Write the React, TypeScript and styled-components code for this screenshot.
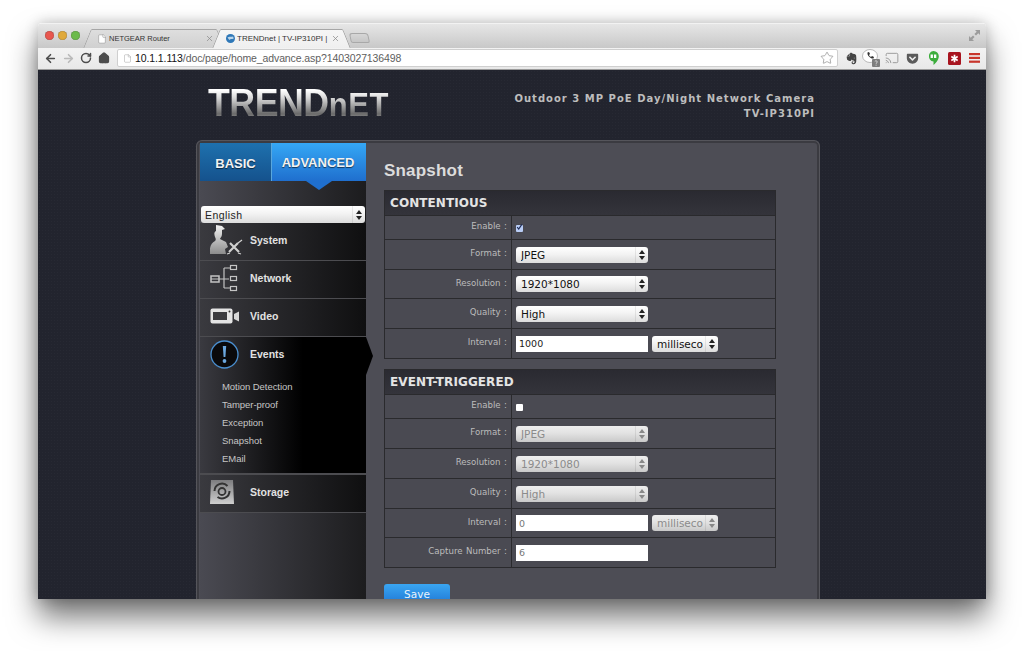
import React from 'react';
import styled, { createGlobalStyle } from 'styled-components';
import { ArrowLeft, ArrowRight, Cast, File, Home, RotateCw, Star, X } from 'lucide-react';
import { FaEvernote, FaGetPocket } from 'react-icons/fa';

const GlobalStyle = createGlobalStyle`
  html, body {
    margin: 0;
    padding: 0;
    background: #fff;
    overflow: hidden;
  }
  * {
    box-sizing: border-box;
  }
`;

const Page = styled.div`
  width: 1024px;
  height: 651px;
  padding: 23px 38px 52px;
  background: #fff;
`;

const Window = styled.div`
  height: 576px;
  display: flex;
  flex-direction: column;
  overflow: hidden;
  border-radius: 4px 4px 0 0;
  box-shadow: 0 18px 30px rgba(0, 0, 0, 0.55), 0 0 14px rgba(0, 0, 0, 0.22);
`;

const TabStrip = styled.div`
  height: 25px;
  flex: none;
  display: flex;
  align-items: flex-end;
  padding-right: 6px;
  background: linear-gradient(#e6e6e6, #c8c8c8);
  border-top: 1px solid #f2f2f2;
`;

const Lights = styled.div`
  display: flex;
  gap: 4px;
  align-self: flex-start;
  margin: 7px 0 0 7px;
`;

const Light = styled.span<{ $color: string }>`
  width: 9px;
  height: 9px;
  border-radius: 50%;
  background: ${p => p.$color};
  box-shadow: inset 0 0 1px rgba(0, 0, 0, 0.6);
`;

const Tab = styled.div<{ $active?: boolean; $width: number }>`
  position: relative;
  z-index: ${p => (p.$active ? 2 : 1)};
  width: ${p => p.$width}px;
  height: 19px;
  margin-left: ${p => (p.$active ? 5 : 12)}px;
  padding: 0 2px 1px 5px;
  display: flex;
  align-items: center;
  gap: 2px;
  font: ${p => (p.$active ? 8 : 7.5)}px 'Liberation Sans', sans-serif;
  color: #333;
  white-space: nowrap;
  background: ${p => (p.$active ? 'linear-gradient(#f6f6f6, #efefef)' : 'linear-gradient(#dedede, #d0d0d0)')};
  border-top: 1px solid #a6a6a6;
  &::before,
  &::after {
    content: '';
    position: absolute;
    top: -1px;
    bottom: 0;
    width: 10px;
    background: inherit;
    border-top: 1px solid #a6a6a6;
  }
  &::before {
    left: -5px;
    transform: skewX(-22deg);
    border-left: 1px solid #a6a6a6;
    border-radius: 2px 0 0 0;
  }
  &::after {
    right: -5px;
    transform: skewX(22deg);
    border-right: 1px solid #a6a6a6;
    border-radius: 0 2px 0 0;
  }
`;

const TabTitle = styled.span`
  position: relative;
  z-index: 1;
  flex: 1;
  overflow: hidden;
`;

const TabIcon = styled.span`
  position: relative;
  z-index: 1;
  display: flex;
  flex: none;
  color: #8c8c8c;
`;

const NewTab = styled.div`
  width: 19px;
  height: 10px;
  margin: 0 0 5px 8px;
  background: linear-gradient(#d6d6d6, #c6c6c6);
  border: 1px solid #a8a8a8;
  border-radius: 3px 3px 2px 2px;
  transform: skewX(12deg);
`;

const Resize = styled.div`
  margin-left: auto;
  align-self: flex-start;
  margin-top: 6px;
  display: flex;
`;

const Toolbar = styled.div`
  position: relative;
  z-index: 3;
  height: 22px;
  flex: none;
  display: flex;
  align-items: center;
  padding: 0 0 1px 3px;
  background: linear-gradient(#f3f3f3, #e8e8e8);
  border-bottom: 1px solid #9b9b9b;
`;

const NavButton = styled.span<{ $muted?: boolean }>`
  width: 18px;
  display: flex;
  justify-content: center;
  color: ${p => (p.$muted ? '#b9b9b9' : '#4d4d4d')};
`;

const Omnibox = styled.div`
  width: 721px;
  height: 18px;
  margin-left: 4px;
  padding: 0 3px 0 5px;
  display: flex;
  align-items: center;
  gap: 3px;
  background: #fff;
  border: 1px solid #cfcfcf;
  border-radius: 2px;
  font: 10.5px 'Liberation Sans', sans-serif;
  letter-spacing: -0.1px;
  color: #5e5e5e;
`;

const Host = styled.span`
  color: #111;
`;

const Url = styled.span`
  flex: 1;
`;

const Extensions = styled.div`
  flex: 1;
  display: grid;
  grid-template-columns: repeat(7, 1fr);
  justify-items: center;
  align-items: center;
  padding: 0 1px 0 3px;
`;

const Extension = styled.span`
  display: flex;
`;

const Content = styled.div`
  flex: 1;
  min-height: 0;
  padding: 0 0 0 158px;
  background-color: #22242e;
  background-image: radial-gradient(#272933 0.6px, transparent 1px);
  background-size: 3px 3px;
`;

const Header = styled.header`
  width: 619px;
  height: 70px;
  padding: 16px 0 0 12px;
  display: flex;
  justify-content: space-between;
`;

const Logo = styled.div`
  height: 34px;
  font: 700 38px/34px 'Liberation Sans', sans-serif;
  letter-spacing: -0.5px;
  color: transparent;
  background: linear-gradient(#fff 12%, #d8d8d8 35%, #6a6a6a 82%, #9a9a9a);
  -webkit-background-clip: text;
  background-clip: text;
  transform: scaleX(0.94);
  transform-origin: left;
`;

const LogoTail = styled.span`
  font-size: 33px;
  letter-spacing: 0.6px;
`;

const Model = styled.div`
  padding-top: 5px;
  text-align: right;
  font: 700 10px/15px 'DejaVu Sans', sans-serif;
  letter-spacing: 1.02px;
  color: #bdbdbd;
`;

const Panel = styled.div`
  width: 624px;
  height: 520px;
  padding: 2px 2px 0 3px;
  display: flex;
  background: #4d4d55;
  border: 1px solid #55555b;
  border-bottom: 0;
  border-radius: 6px 6px 0 0;
  box-shadow: inset 0 0 0 2px #3b3b41;
`;

const Sidebar = styled.nav`
  position: relative;
  width: 166px;
  flex: none;
  background: linear-gradient(90deg, #4a4a52, #1c1c1e);
`;

const Tabs = styled.div`
  height: 38px;
  display: flex;
`;

const ModeTab = styled.div<{ $active?: boolean; $width: number }>`
  position: relative;
  width: ${p => p.$width}px;
  display: flex;
  align-items: center;
  justify-content: center;
  padding: 2px ${p => (p.$active ? 2 : 0)}px ${p => (p.$active ? 2 : 0)}px 0;
  font: 700 13px 'Liberation Sans', sans-serif;
  color: #f2f2f2;
  text-shadow: 0 1px 1px rgba(0, 0, 0, 0.6);
  background: ${p =>
    p.$active
      ? 'linear-gradient(#35a8f5, #1f6fce)'
      : 'linear-gradient(#1e71ae, #15528d)'};
  border-left: ${p => (p.$active ? '1px solid #5aa7dc' : 0)};
  ${p =>
    p.$active &&
    `
    &::after {
      content: '';
      position: absolute;
      left: 34px;
      bottom: -9px;
      border: 13px solid transparent;
      border-bottom: 0;
      border-top: 9px solid #1f6fce;
    }
  `}
`;

const LangRow = styled.div`
  padding: 25px 0 0 1px;
`;

const Item = styled.div<{ $active?: boolean }>`
  position: relative;
  height: 38px;
  padding: 0 0 4px 10px;
  display: flex;
  align-items: center;
  background: ${p =>
    p.$active
      ? 'linear-gradient(90deg, #3a3a40, #000 62%)'
      : 'linear-gradient(90deg, #3a3a3f, #0f0f10)'};
  border-bottom: ${p => (p.$active ? 0 : '1px solid #4c4c50')};
  font: 700 10.5px 'Liberation Sans', sans-serif;
  color: #e2e2e2;
`;

const ItemIcon = styled.span`
  width: 40px;
  flex: none;
  display: flex;
  align-items: center;
`;

const EventsGroup = styled.div`
  position: relative;
  height: 138px;
  background: linear-gradient(90deg, #3a3a40, #000 62%);
  border-bottom: 2px solid #4c4c50;
`;

const EventsHead = styled(Item)`
  background: none;
`;

const Pointer = styled.span`
  position: absolute;
  top: 0;
  left: 100%;
  z-index: 2;
  width: 7px;
  height: 38px;
  background: #000;
  clip-path: polygon(0 0, 100% 50%, 0 100%);
`;

const SubList = styled.ul`
  list-style: none;
  margin: 3px 0 0;
  padding: 0 0 0 22px;
  font: 9.5px/18px 'Liberation Sans', sans-serif;
  letter-spacing: -0.05px;
  color: #c6c6c6;
`;

const Main = styled.main`
  flex: 1;
  padding: 0 41px 0 18px;
`;

const Title = styled.h1`
  margin: 0;
  height: 47px;
  padding-top: 18px;
  font: 700 17px/20px 'Liberation Sans', sans-serif;
  letter-spacing: 0.2px;
  color: #dcdcdc;
`;

const Section = styled.section`
  margin-bottom: 10px;
  background: #4a4a52;
  border: 1px solid #2a2a2d;
`;

const SectionHead = styled.h2`
  margin: 0;
  height: 24px;
  padding-left: 5px;
  font: 700 12px/24px 'DejaVu Sans', sans-serif;
  letter-spacing: 0.08px;
  color: #e4e4e4;
  background: linear-gradient(#2a2a31, #34343b);
`;

const Row = styled.div<{ $height: number }>`
  height: ${p => p.$height}px;
  display: flex;
  border-top: 1px solid #2a2a2d;
`;

const Label = styled.div`
  width: 127px;
  flex: none;
  padding: 0 4px 3px 0;
  display: flex;
  align-items: center;
  justify-content: flex-end;
  font: 8.6px 'DejaVu Sans', sans-serif;
  word-spacing: 0.8px;
  color: #bcbcbc;
  border-right: 1px solid #2a2a2d;
`;

const Field = styled.div`
  flex: 1;
  padding-left: 4px;
  display: flex;
  align-items: center;
  gap: 4px;
`;

const SelectWrap = styled.div<{ $width: number; $height?: number }>`
  position: relative;
  width: ${p => p.$width}px;
  height: ${p => p.$height ?? 16}px;
`;

const Select = styled.select`
  display: block;
  width: 100%;
  height: 100%;
  margin: 0;
  padding: 0 14px 0 5px;
  appearance: none;
  border: 0;
  border-radius: 3px;
  outline: 0;
  font: 10.5px 'DejaVu Sans', sans-serif;
  opacity: 1;
  color: #111;
  background: linear-gradient(#fff, #f3f3f3 45%, #dcdcdc);
  &:disabled {
    color: #8b8b8b;
    background: linear-gradient(#eeeeee, #e2e2e2 45%, #c9c9c9);
  }
`;

const LangSelect = styled(Select)`
  padding-left: 4px;
  font: 10.5px 'Liberation Sans', sans-serif;
  letter-spacing: 0.45px;
  color: #222;
`;

const ArrowBox = styled.span<{ $disabled?: boolean }>`
  position: absolute;
  top: 0;
  right: 0;
  width: 13px;
  height: 100%;
  display: flex;
  align-items: center;
  justify-content: center;
  color: ${p => (p.$disabled ? '#888' : '#222')};
  border-left: 1px solid rgba(0, 0, 0, 0.08);
  pointer-events: none;
`;

const TextInput = styled.input`
  width: 132px;
  height: 16px;
  margin: 0;
  padding: 0 3px;
  border: 0;
  outline: 0;
  font: 9.5px 'DejaVu Sans', sans-serif;
  color: #222;
  background: #fff;
  &:disabled {
    color: #777;
    background: #fff;
  }
`;

const CheckBox = styled.span<{ $checked?: boolean }>`
  width: 7px;
  height: 7px;
  margin: 2px 0 0 0;
  display: flex;
  border-radius: 1px;
  background: ${p => (p.$checked ? '#b9cdf6' : '#fff')};
`;

const SaveButton = styled.button`
  width: 66px;
  height: 20px;
  margin-top: 6px;
  padding: 0;
  border: 0;
  border-radius: 3px 3px 0 0;
  font: 10.5px 'DejaVu Sans', sans-serif;
  color: #e8f3fc;
  background: linear-gradient(#3aa6f2, #1f78d6);
`;

const Arrows: React.FC<{ disabled?: boolean }> = ({ disabled }) => (
  <ArrowBox $disabled={disabled}>
    <svg width="6" height="10" viewBox="0 0 6 10" fill="currentColor">
      <path d="M3 0l3 4H0zM3 10L0 6h6z" />
    </svg>
  </ArrowBox>
);

const Dropdown: React.FC<{ value: string; width?: number; disabled?: boolean }> = ({
  value,
  width = 132,
  disabled,
}) => (
  <SelectWrap $width={width}>
    <Select disabled={disabled} defaultValue={value}>
      <option>{value}</option>
    </Select>
    <Arrows disabled={disabled} />
  </SelectWrap>
);

const SystemIcon = () => (
  <svg width="34" height="32" viewBox="0 0 34 32">
    <defs>
      <linearGradient id="sys" x1="0" y1="0" x2="0" y2="1">
        <stop offset="0" stopColor="#f2f2f2" />
        <stop offset="1" stopColor="#8c8c8c" />
      </linearGradient>
    </defs>
    <path
      fill="url(#sys)"
      d="M6 1l6 1 3 3-3 1 0 4c0 3-2 4-2 5l6 3 2 5-3 2 1 5H0c-1-6 1-11 5-13 1-1 1-2 0-4-1-3-1-5 1-6z"
    />
    <path fill="none" stroke="#d0d0d0" strokeWidth="2.200" d="M19 28l9-9M20 19l9 9" />
    <path fill="none" stroke="#d0d0d0" strokeWidth="1.300" d="M28 19l4-3M17 30l3-1M28 29l3 1" />
  </svg>
);

const NetworkIcon = () => (
  <svg width="30" height="28" viewBox="0 0 30 28" fill="none" stroke="#c4c4c4" strokeWidth="1.2">
    <rect x="1" y="12" width="8" height="6" strokeWidth="1.5" />
    <path d="M1 15h8M9 15h10M14 4v20M14 4h6M14 24h6" />
    <rect x="20.5" y="1.5" width="6" height="4" />
    <rect x="20.5" y="12.5" width="6" height="4" />
    <rect x="20.5" y="22.5" width="6" height="4" />
  </svg>
);

const VideoIcon = () => (
  <svg width="30" height="16" viewBox="0 0 30 16">
    <rect x="0.5" y="0.5" width="22" height="15" rx="2" fill="#e4e4e4" />
    <rect x="3" y="4" width="14" height="8" fill="#3b3b3f" />
    <circle cx="19.5" cy="3.5" r="1" fill="#333" />
    <path d="M24 6l5-2.500v10l-5-2.500z" fill="#d8d8d8" />
  </svg>
);

const EventsIcon = () => (
  <svg width="29" height="29" viewBox="0 0 29 29">
    <circle cx="14.500" cy="14.500" r="13.500" fill="#0a0a0c" stroke="#4a8fd0" strokeWidth="1.300" />
    <path d="M12.800 6h3.400l-.8 11h-1.800z" fill="#6ba7de" />
    <circle cx="14.500" cy="21" r="1.900" fill="#6ba7de" />
  </svg>
);

const StorageIcon = () => (
  <svg width="24" height="25" viewBox="0 0 24 25">
    <defs>
      <linearGradient id="disk" x1="0" y1="0" x2="0" y2="1">
        <stop offset="0" stopColor="#7c7c7e" />
        <stop offset="1" stopColor="#cfcfcf" />
      </linearGradient>
    </defs>
    <path d="M1 1h22l1 24H0z" fill="url(#disk)" />
    <path
      d="M4.500 12a7.500 7.500 0 0 1 13-5M19.500 12a7.500 7.500 0 0 1-12 6"
      fill="none"
      stroke="#333"
      strokeWidth="2"
    />
    <circle cx="12" cy="12.500" r="3.500" fill="none" stroke="#333" strokeWidth="1.800" />
  </svg>
);

const ResizeIcon = () => (
  <svg width="11" height="11" viewBox="0 0 11 11" fill="#9c9c9c">
    <path d="M6 0h5v5L9.300 3.300 7 5.600 5.400 4 7.700 1.700zM0 11V6l1.700 1.700L4 5.400 5.600 7 3.300 9.300 5 11z" />
  </svg>
);

const GlobeIcon = () => (
  <svg width="9" height="9" viewBox="0 0 9 9">
    <circle cx="4.500" cy="4.500" r="4.500" fill="#2f78b8" />
    <path d="M1.500 3.500c2-1.500 3.500 0 5.500-1l.8 2c-2 1-3 0-4.500 1.500z" fill="#bcd6ea" />
  </svg>
);

const PhoneBubble = () => (
  <svg width="19" height="18" viewBox="0 0 19 18">
    <ellipse cx="8" cy="7" rx="7.500" ry="6.500" fill="#fff" stroke="#aaa" strokeWidth="0.800" />
    <path d="M5.500 3.500l1.500-.5 1 2-1 1c.5 1 1 1.500 2 2l1-1 2 1-.5 1.500c-3 .5-6.500-3-6-6z" fill="#333" />
    <rect x="10" y="10" width="8" height="8" rx="1" fill="#7d7d7d" />
    <path d="M12.800 12.500c.5-1 2.500-.8 2.500.4 0 .9-1.200.9-1.200 1.900M14.100 15.700v1" stroke="#eee" fill="none" strokeWidth="0.800" />
  </svg>
);

const Hangouts = () => (
  <svg width="11" height="15" viewBox="0 0 11 15">
    <path d="M5.500 0a5.300 5.300 0 0 1 5.300 5.300c0 3.500-2.800 6.700-5.300 8.700v-3.500a5.300 5.300 0 0 1 0-10.500z" fill="#3cad3c" />
    <rect x="2.600" y="3.500" width="2.300" height="3.500" fill="#fff" />
    <rect x="6" y="3.500" width="2.300" height="3.500" fill="#fff" />
  </svg>
);

const LastPass = () => (
  <svg width="13" height="13" viewBox="0 0 13 13">
    <rect width="13" height="13" rx="1.500" fill="#a8141f" />
    <path d="M6.500 2.800v7.400M3.300 4.600l6.400 3.800M9.700 4.600l-6.400 3.800" stroke="#fff" strokeWidth="1.700" />
  </svg>
);

const MenuBars = () => (
  <svg width="11" height="10" viewBox="0 0 11 10" fill="#c8352b">
    <rect width="11" height="2.200" />
    <rect y="3.800" width="11" height="2.200" />
    <rect y="7.600" width="11" height="2.200" />
  </svg>
);

const Check = () => (
  <svg width="9" height="9" viewBox="0 0 9 9" style={{ margin: '-2px 0 0 0' }}>
    <path d="M1.500 4l2 2.500L7.500 0.500" fill="none" stroke="#1c2a55" strokeWidth="1.500" />
  </svg>
);

const App: React.FC = () => {
  return (
    <Page>
      <GlobalStyle />
      <Window>
        <TabStrip>
          <Lights>
            <Light $color="#e8574f" />
            <Light $color="#e0a93a" />
            <Light $color="#6cba4c" />
          </Lights>
          <Tab $width={124}>
            <TabIcon>
              <File size={10} fill="#fff" strokeWidth={1.3} />
            </TabIcon>
            <TabTitle>NETGEAR Router</TabTitle>
            <TabIcon>
              <X size={9} strokeWidth={2} />
            </TabIcon>
          </Tab>
          <Tab $active $width={121}>
            <TabIcon>
              <GlobeIcon />
            </TabIcon>
            <TabTitle>TRENDnet | TV-IP310PI | C</TabTitle>
            <TabIcon>
              <X size={9} strokeWidth={2} />
            </TabIcon>
          </Tab>
          <NewTab />
          <Resize>
            <ResizeIcon />
          </Resize>
        </TabStrip>
        <Toolbar>
          <NavButton>
            <ArrowLeft size={13} strokeWidth={3} />
          </NavButton>
          <NavButton $muted>
            <ArrowRight size={13} strokeWidth={3} />
          </NavButton>
          <NavButton>
            <RotateCw size={12} strokeWidth={3} />
          </NavButton>
          <NavButton>
            <Home size={12} strokeWidth={2.5} fill="currentColor" />
          </NavButton>
          <Omnibox>
            <File size={9} strokeWidth={1.2} color="#999" />
            <Url>
              <Host>10.1.1.113</Host>/doc/page/home_advance.asp?1403027136498
            </Url>
            <Star size={14} strokeWidth={1.2} color="#8c8c8c" />
          </Omnibox>
          <Extensions>
            <Extension>
              <FaEvernote size={13} color="#444" />
            </Extension>
            <Extension>
              <PhoneBubble />
            </Extension>
            <Extension>
              <Cast size={14} color="#8a8a8a" strokeWidth={1.4} />
            </Extension>
            <Extension>
              <FaGetPocket size={13} color="#5b5b5b" />
            </Extension>
            <Extension>
              <Hangouts />
            </Extension>
            <Extension>
              <LastPass />
            </Extension>
            <Extension>
              <MenuBars />
            </Extension>
          </Extensions>
        </Toolbar>
        <Content>
          <Header>
            <Logo>
              TREND<LogoTail>nET</LogoTail>
            </Logo>
            <Model>
              Outdoor 3 MP PoE Day/Night Network Camera
              <br />
              TV-IP310PI
            </Model>
          </Header>
          <Panel>
            <Sidebar>
              <Tabs>
                <ModeTab $width={71}>BASIC</ModeTab>
                <ModeTab $active $width={95}>
                  ADVANCED
                </ModeTab>
              </Tabs>
              <LangRow>
                <SelectWrap $width={164} $height={17}>
                  <LangSelect defaultValue="English">
                    <option>English</option>
                  </LangSelect>
                  <Arrows />
                </SelectWrap>
              </LangRow>
              <Item>
                <ItemIcon>
                  <SystemIcon />
                </ItemIcon>
                System
              </Item>
              <Item>
                <ItemIcon>
                  <NetworkIcon />
                </ItemIcon>
                Network
              </Item>
              <Item>
                <ItemIcon>
                  <VideoIcon />
                </ItemIcon>
                Video
              </Item>
              <EventsGroup>
                <Pointer />
                <EventsHead $active>
                  <ItemIcon>
                    <EventsIcon />
                  </ItemIcon>
                  Events
                </EventsHead>
                <SubList>
                  <li>Motion Detection</li>
                  <li>Tamper-proof</li>
                  <li>Exception</li>
                  <li>Snapshot</li>
                  <li>EMail</li>
                </SubList>
              </EventsGroup>
              <Item>
                <ItemIcon>
                  <StorageIcon />
                </ItemIcon>
                Storage
              </Item>
            </Sidebar>
            <Main>
              <Title>Snapshot</Title>
              <Section>
                <SectionHead>CONTENTIOUS</SectionHead>
                <Row $height={24}>
                  <Label>Enable :</Label>
                  <Field>
                    <CheckBox $checked>
                      <Check />
                    </CheckBox>
                  </Field>
                </Row>
                <Row $height={30}>
                  <Label>Format :</Label>
                  <Field>
                    <Dropdown value="JPEG" />
                  </Field>
                </Row>
                <Row $height={29}>
                  <Label>Resolution :</Label>
                  <Field>
                    <Dropdown value="1920*1080" />
                  </Field>
                </Row>
                <Row $height={30}>
                  <Label>Quality :</Label>
                  <Field>
                    <Dropdown value="High" />
                  </Field>
                </Row>
                <Row $height={30}>
                  <Label>Interval :</Label>
                  <Field>
                    <TextInput defaultValue="1000" />
                    <Dropdown value="milliseco" width={66} />
                  </Field>
                </Row>
              </Section>
              <Section>
                <SectionHead>EVENT-TRIGGERED</SectionHead>
                <Row $height={24}>
                  <Label>Enable :</Label>
                  <Field>
                    <CheckBox />
                  </Field>
                </Row>
                <Row $height={30}>
                  <Label>Format :</Label>
                  <Field>
                    <Dropdown value="JPEG" disabled />
                  </Field>
                </Row>
                <Row $height={30}>
                  <Label>Resolution :</Label>
                  <Field>
                    <Dropdown value="1920*1080" disabled />
                  </Field>
                </Row>
                <Row $height={30}>
                  <Label>Quality :</Label>
                  <Field>
                    <Dropdown value="High" disabled />
                  </Field>
                </Row>
                <Row $height={29}>
                  <Label>Interval :</Label>
                  <Field>
                    <TextInput defaultValue="0" disabled />
                    <Dropdown value="milliseco" width={66} disabled />
                  </Field>
                </Row>
                <Row $height={30}>
                  <Label>Capture Number :</Label>
                  <Field>
                    <TextInput defaultValue="6" disabled />
                  </Field>
                </Row>
              </Section>
              <SaveButton>Save</SaveButton>
            </Main>
          </Panel>
        </Content>
      </Window>
    </Page>
  );
};

export default App;
